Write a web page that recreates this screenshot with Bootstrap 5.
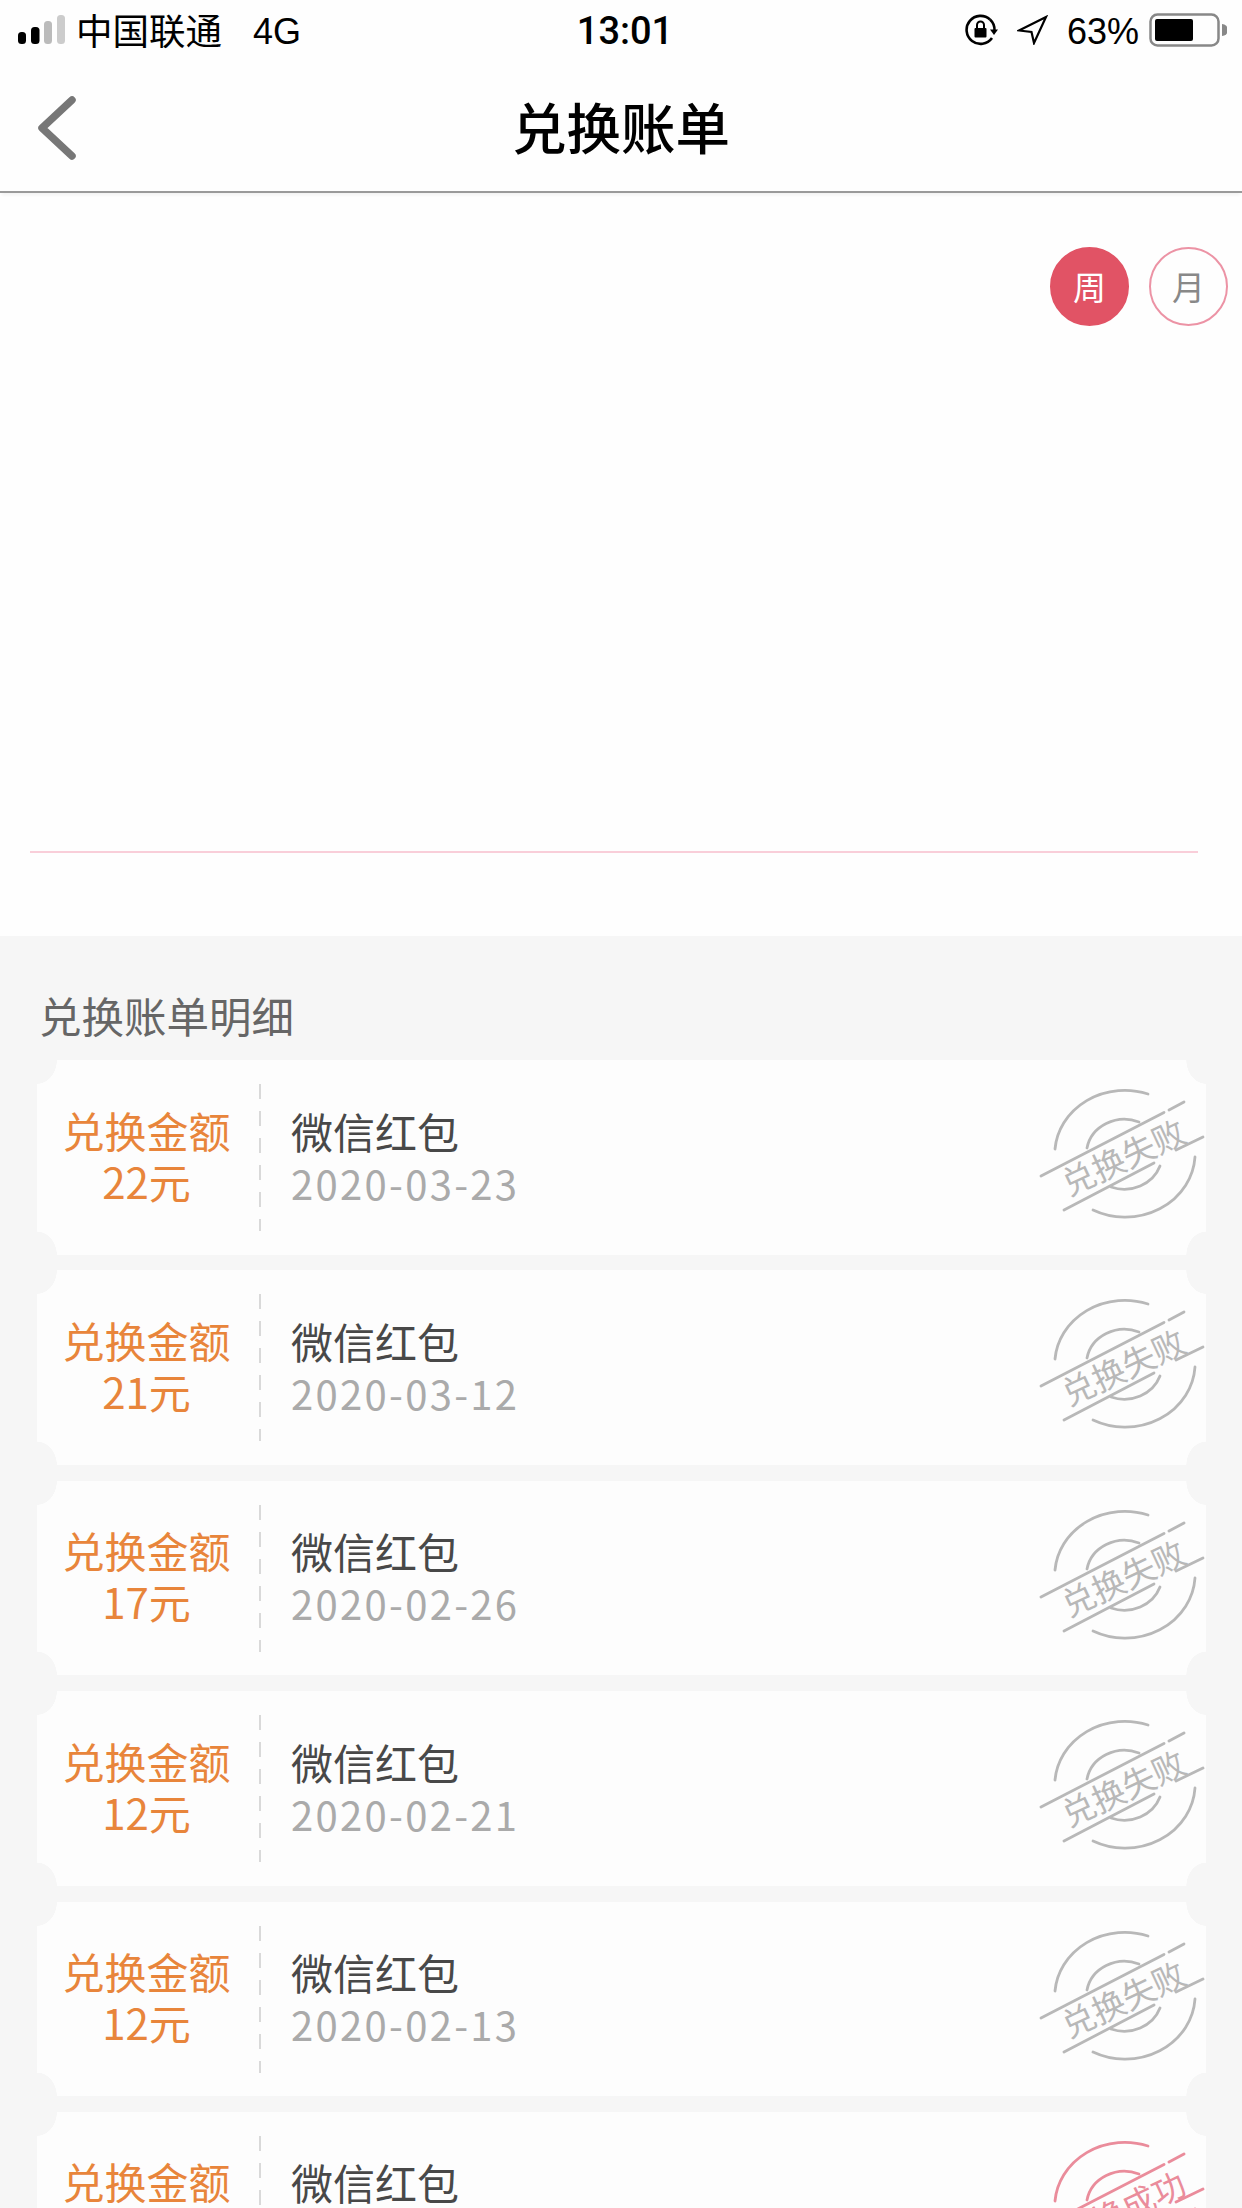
<!DOCTYPE html>
<html lang="zh-CN">
<head>
  <meta charset="UTF-8" />
  <meta name="viewport" content="width=device-width, initial-scale=1.0" />
  <title>兑换账单</title>
  <link href="https://cdn.jsdelivr.net/npm/bootstrap@5.3.0/dist/css/bootstrap.min.css" rel="stylesheet" />
  <style>
    html, body {
      height: 2208px;
      overflow: hidden;
    }
    body {
      background: #fefefe;
      font-family: "Noto Sans CJK SC", "Liberation Sans", sans-serif;
    }
    .status-bar {
      height: 60px;
      padding: 0 15px 0 18px;
      font-family: "Liberation Sans", "Noto Sans CJK SC", sans-serif;
      font-size: 36px;
      color: #000;
    }
    .status-side {
      width: 480px;
    }
    .status-latin {
      padding-top: 3px;
    }
    .signal-bars {
      height: 30px;
      width: 48px;
      margin-right: 10px;
    }
    .carrier {
      font-family: "Noto Sans CJK SC", sans-serif;
      font-size: 36.5px;
      margin-right: 31px;
    }
    .clock {
      font-family: Roboto, "Liberation Sans", sans-serif;
      font-weight: 500;
      font-size: 38px;
      padding: 3px 0 0 5px;
    }
    .rotation-lock {
      margin-right: 18px;
    }
    .location-arrow {
      margin-right: 19px;
    }
    .battery-pct {
      margin-right: 10px;
    }
    .title-bar {
      height: 133px;
      border-bottom: 2px solid #9a9a9a;
      box-shadow: 0 4px 3px -2px #f2f2f2;
      position: relative;
    }
    .back-arrow {
      position: absolute;
      left: 35px;
      top: 35px;
    }
    .page-title {
      font-size: 54.5px;
      font-weight: 500;
      color: #000;
      margin: 0;
    }
    .chart-area {
      height: 743px;
      padding: 54px 14px 0 30px;
    }
    .range-group {
      gap: 20px;
    }
    .range-btn {
      width: 79px;
      height: 79px;
      padding: 0;
      border-radius: 50%;
      font-size: 33px;
      line-height: 1;
      border: 2px solid #ec93a5;
      background: #fefefe;
      color: #888;
    }
    .range-btn.is-active {
      background: #e15365;
      border-color: #e15365;
      color: #fff;
    }
    .chart-axis {
      height: 2px;
      margin-top: 525px;
      margin-right: 30px;
      background: #f9ced9;
    }
    .detail-section {
      background: #f6f6f6;
      height: 1273px;
      padding: 0 36px 0 37px;
    }
    .detail-title {
      font-size: 42.5px;
      line-height: 60px;
      color: #666;
      font-weight: 400;
      margin: 0;
      padding: 49px 0 14px 2px;
      height: 124px;
    }
    .ticket {
      position: relative;
      height: 195px;
      margin-bottom: 15.4px;
      background:
        radial-gradient(ellipse 20px 24px at 0 0, transparent 98%, #fdfdfd 100%) left top / 51% 51% no-repeat,
        radial-gradient(ellipse 20px 24px at 100% 0, transparent 98%, #fdfdfd 100%) right top / 51% 51% no-repeat,
        radial-gradient(ellipse 20px 24px at 0 100%, transparent 98%, #fdfdfd 100%) left bottom / 51% 51% no-repeat,
        radial-gradient(ellipse 20px 24px at 100% 100%, transparent 98%, #fdfdfd 100%) right bottom / 51% 51% no-repeat;
    }
    .ticket-amount {
      width: 205px;
      margin-right: 17px;
      padding: 0 0 6px 14px;
      font-size: 42px;
      line-height: 51px;
      color: #e8853b;
      text-align: center;
    }
    .ticket-rule {
      width: 2px;
      height: 147px;
      background: repeating-linear-gradient(#d9d9d9 0 15px, transparent 15px 27px);
    }
    .ticket-info {
      padding: 0 0 2px 30px;
    }
    .ticket-name {
      font-size: 42px;
      line-height: 52px;
      color: #484848;
    }
    .ticket-date {
      font-size: 40px;
      line-height: 52px;
      letter-spacing: 2.3px;
      color: #aaa;
    }
    .ticket-stamp {
      position: absolute;
      right: 1px;
      top: 25px;
      width: 170px;
      height: 135px;
      color: #b8b8b8;
    }
    .ticket-stamp.is-done {
      color: #ea8c9b;
    }
    .ticket-stamp text {
      font-size: 33px;
      fill: currentColor;
      text-anchor: middle;
      dominant-baseline: central;
    }
  </style>
</head>
<body>
  <svg width="0" height="0" class="position-absolute">
    <symbol id="stamp-rings" viewBox="0 0 170 135">
      <g fill="none" stroke="currentColor" stroke-width="2.8" stroke-linecap="round">
        <path d="M20 64A70 64 0 0 1 113 9" />
        <path d="M160 72A70 64 0 0 1 58 125" />
        <path d="M52 63A38 35 0 0 1 104 37" />
        <path d="M125 81A38 35 0 0 1 76 102" />
        <path d="M6 91L129 27.5M134 25L149 17" />
        <path d="M29 125L119 78M141 65L168 52" />
      </g>
    </symbol>
  </svg>

  <div class="status-bar d-flex align-items-center justify-content-between">
    <div class="status-side d-flex align-items-center">
      <svg class="signal-bars" viewBox="0 0 48 30">
        <rect x="0" y="17" width="8" height="12" rx="3.5" fill="#000" />
        <rect x="13" y="12" width="8.5" height="17" rx="3.5" fill="#000" />
        <rect x="26" y="6" width="8" height="23" rx="3.5" fill="#bbb" />
        <rect x="39" y="0" width="8" height="29" rx="3.5" fill="#ccc" />
      </svg>
      <span class="carrier">中国联通</span>
      <span class="status-latin">4G</span>
    </div>
    <span class="clock">13:01</span>
    <div class="status-side d-flex align-items-center justify-content-end">
      <svg class="rotation-lock" width="34" height="32" viewBox="0 0 34 32">
        <path d="M25 5.5A14 14 0 1 0 27 24" fill="none" stroke="#000" stroke-width="2.6" />
        <path d="M25 5.5A14 14 0 0 1 29.5 17" fill="none" stroke="#000" stroke-width="2.6" />
        <path d="M25 15.5h8l-4 5.5z" fill="#000" />
        <rect x="9.5" y="14" width="12" height="9.5" rx="1" fill="#000" />
        <path d="M12 14v-3a3.5 3.5 0 0 1 7 0v3" fill="none" stroke="#000" stroke-width="2" />
      </svg>
      <svg class="location-arrow" width="31" height="30" viewBox="0 0 31 30">
        <path d="M29 2L2 15.5l12.5 1.5L17 28z" fill="none" stroke="#000" stroke-width="2.2" stroke-linejoin="miter" />
      </svg>
      <span class="status-latin battery-pct">63%</span>
      <svg width="78" height="34" viewBox="0 0 78 34">
        <rect x="1.5" y="1.5" width="68" height="31" rx="7" fill="none" stroke="#888" stroke-width="2.5" />
        <rect x="6" y="6" width="38" height="22" rx="2" fill="#000" />
        <path d="M73 11a6 6 0 0 1 0 12z" fill="#888" />
      </svg>
    </div>
  </div>

  <div class="title-bar d-flex align-items-center justify-content-center">
    <svg class="back-arrow" width="44" height="66" viewBox="0 0 44 66">
      <path d="M37 5L7 33l30 28" fill="none" stroke="#777" stroke-width="7.5" stroke-linecap="round" stroke-linejoin="round" />
    </svg>
    <h1 class="page-title">兑换账单</h1>
  </div>

  <div class="chart-area">
    <div class="range-group d-flex justify-content-end">
      <button type="button" class="btn range-btn is-active">周</button>
      <button type="button" class="btn range-btn">月</button>
    </div>
    <div class="chart-axis"></div>
  </div>

  <div class="detail-section">
    <h2 class="detail-title">兑换账单明细</h2>

    <div class="ticket d-flex align-items-center">
      <div class="ticket-amount"><div>兑换金额</div><div>22元</div></div>
      <div class="ticket-rule"></div>
      <div class="ticket-info"><div class="ticket-name">微信红包</div><div class="ticket-date">2020-03-23</div></div>
      <svg class="ticket-stamp" viewBox="0 0 170 135"><use href="#stamp-rings" /><text x="88" y="71" transform="rotate(-25 88 71)">兑换失败</text></svg>
    </div>
    <div class="ticket d-flex align-items-center">
      <div class="ticket-amount"><div>兑换金额</div><div>21元</div></div>
      <div class="ticket-rule"></div>
      <div class="ticket-info"><div class="ticket-name">微信红包</div><div class="ticket-date">2020-03-12</div></div>
      <svg class="ticket-stamp" viewBox="0 0 170 135"><use href="#stamp-rings" /><text x="88" y="71" transform="rotate(-25 88 71)">兑换失败</text></svg>
    </div>
    <div class="ticket d-flex align-items-center">
      <div class="ticket-amount"><div>兑换金额</div><div>17元</div></div>
      <div class="ticket-rule"></div>
      <div class="ticket-info"><div class="ticket-name">微信红包</div><div class="ticket-date">2020-02-26</div></div>
      <svg class="ticket-stamp" viewBox="0 0 170 135"><use href="#stamp-rings" /><text x="88" y="71" transform="rotate(-25 88 71)">兑换失败</text></svg>
    </div>
    <div class="ticket d-flex align-items-center">
      <div class="ticket-amount"><div>兑换金额</div><div>12元</div></div>
      <div class="ticket-rule"></div>
      <div class="ticket-info"><div class="ticket-name">微信红包</div><div class="ticket-date">2020-02-21</div></div>
      <svg class="ticket-stamp" viewBox="0 0 170 135"><use href="#stamp-rings" /><text x="88" y="71" transform="rotate(-25 88 71)">兑换失败</text></svg>
    </div>
    <div class="ticket d-flex align-items-center">
      <div class="ticket-amount"><div>兑换金额</div><div>12元</div></div>
      <div class="ticket-rule"></div>
      <div class="ticket-info"><div class="ticket-name">微信红包</div><div class="ticket-date">2020-02-13</div></div>
      <svg class="ticket-stamp" viewBox="0 0 170 135"><use href="#stamp-rings" /><text x="88" y="71" transform="rotate(-25 88 71)">兑换失败</text></svg>
    </div>
    <div class="ticket d-flex align-items-center">
      <div class="ticket-amount"><div>兑换金额</div><div>10元</div></div>
      <div class="ticket-rule"></div>
      <div class="ticket-info"><div class="ticket-name">微信红包</div><div class="ticket-date">2020-02-05</div></div>
      <svg class="ticket-stamp is-done" viewBox="0 0 170 135"><use href="#stamp-rings" /><text x="88" y="71" transform="rotate(-25 88 71)">兑换成功</text></svg>
    </div>
  </div>

  <script src="https://cdn.jsdelivr.net/npm/bootstrap@5.3.0/dist/js/bootstrap.bundle.min.js"></script>
</body>
</html>
